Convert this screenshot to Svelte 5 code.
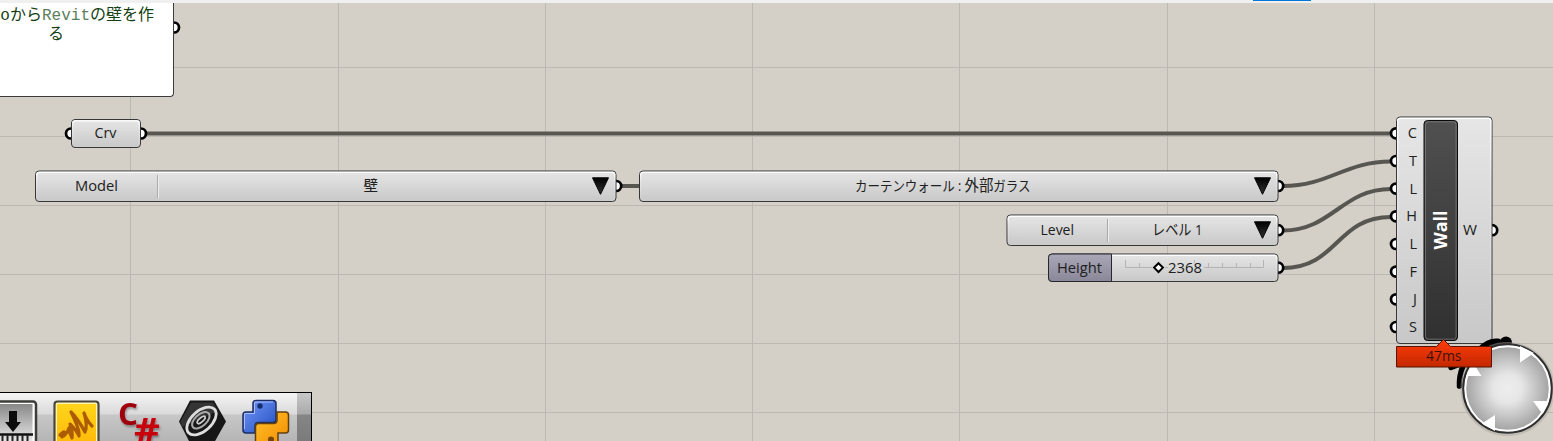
<script>
  const columns = [130.5, 338.5, 545.5, 752.5, 959.5, 1167.5, 1374.5];
  const rows = [67.5, 136.5, 205.5, 274.5, 343.5, 412.5];
  const ports = [
    [174, 27.5], [71, 133.5], [141, 133.5], [616.2, 186], [1278.2, 186], [1278.2, 230.2], [1278.2, 267.7],
    [1492.2, 230.2]
  ];
  const inputs = [
    { name: 'C', y: 133.3 }, { name: 'T', y: 161 }, { name: 'L', y: 188.6 }, { name: 'H', y: 216.3 },
    { name: 'L', y: 244 }, { name: 'F', y: 271.6 }, { name: 'J', y: 299.3 }, { name: 'S', y: 327 }
  ];
  const wires = [
    'M146 133.5H1391',
    'M621 186H640',
    'M1283 186C1329 186 1345 161.5 1391 161.5',
    'M1283 230.5C1332 230.5 1342 189 1391 189',
    'M1283 268C1338 268 1336 217 1391 217'
  ];
  const boxes = [
    { x: 71.5, y: 119.5, w: 69, h: 28 },
    { x: 35.5, y: 171, w: 580.5, h: 30.5 },
    { x: 639.5, y: 171, w: 638.5, h: 30.5 },
    { x: 1007, y: 215, w: 271, h: 30.5 },
    { x: 1048.5, y: 254, w: 229.5, h: 27.5 },
    { x: 1396.5, y: 117, w: 95.5, h: 226.5 }
  ];
  const labels = [
    { t: 'Crv', x: 94.5, y: 138.3, w: 22 },
    { t: 'Model', x: 75, y: 191, w: 43 },
    { t: '壁', x: 363.5, y: 191, w: 14.5 },
    { t: 'Level', x: 1040.5, y: 235, w: 33.5 },
    { t: 'レベル 1', x: 1152, y: 235, w: 50.5 },
    { t: 'Height', x: 1057, y: 272.7, w: 45 },
    { t: '2368', x: 1168, y: 272.7, w: 34 },
    { t: 'W', x: 1463, y: 235, w: 14 }
  ];
  const arrows = [[592.5, 177.8], [1254.5, 177.8], [1254.5, 221.8]];
</script>

<main>
  <div class="topbar"><i></i></div>

  <svg class="canvas" width="1553" height="441" viewBox="0 0 1553 441">
    <defs>
      <linearGradient id="box" x2="0" y2="1"><stop stop-color="#e6e6e6" /><stop offset="1" stop-color="#c8c8c8" /></linearGradient>
      <linearGradient id="edge" x2="0" y2="1"><stop stop-color="#fff" /><stop offset=".3" stop-color="#fff" stop-opacity=".35" /><stop offset="1" stop-color="#fff" stop-opacity=".05" /></linearGradient>
      <linearGradient id="dark" x2="0" y2="1"><stop stop-color="#505050" /><stop offset="1" stop-color="#303030" /></linearGradient>
      <linearGradient id="mauve" x2="0" y2="1"><stop stop-color="#aaa8b8" /><stop offset="1" stop-color="#8a8898" /></linearGradient>
      <linearGradient id="red" x2="0" y2="1"><stop stop-color="#ff3c0a" /><stop offset="1" stop-color="#c42800" /></linearGradient>
      <linearGradient id="tri" x2="0" y2="1"><stop stop-color="#000" /><stop offset="1" stop-color="#333" /></linearGradient>
      <radialGradient id="dial"><stop stop-color="#eee" /><stop offset=".35" stop-color="#e6e6e6" /><stop offset="1" stop-color="#a5a5a5" /></radialGradient>
    </defs>

    <g class="grid">
      {#each columns as x}<path d="M{x} 3V441" />{/each}
      {#each rows as y}<path d="M0 {y}H1553" />{/each}
    </g>

    <g class="wires">{#each wires as d}<path {d} />{/each}</g>

    <g class="ports">
      {#each ports as [x, y]}<circle cx={x} cy={y} r="5" />{/each}
      {#each inputs as p}<circle cx="1396" cy={p.y} r="5" />{/each}
    </g>

    {#each boxes as b}
      <rect class="box" x={b.x} y={b.y} width={b.w} height={b.h} rx="3.5" />
      <rect class="shine" x={b.x + 1.2} y={b.y + 1.3} width={b.w - 2.4} height={b.h - 2.4} rx="2.5" />
    {/each}

    <path d="M157.5 175V198M1107.5 219V242" stroke="#aaa" />
    <path d="M158.5 175V198M1108.5 219V242" stroke="#eee" />
    <path d="M1111.5 254H1052a3.5 3.5 0 0 0-3.5 3.5V278a3.5 3.5 0 0 0 3.5 3.5H1111.5z" fill="url(#mauve)" stroke="#26262c" />
    <path d="M1125.5 260V267.5H1152M1165 267.5H1168M1204 267.5H1263.5V260M1139.5 263V267M1208.5 263V267M1222.5 263V267M1236.5 263V267M1250.5 263V267M1194.5 260V263" fill="none" stroke="#b4b4b4" />
    <path d="M1158.5 263.2l4.4 4.4-4.4 4.4-4.4-4.4z" fill="#fff" stroke="#000" stroke-width="2" />
    {#each arrows as [x, y]}<path d="M{x} {y}h16l-8 16.5z" fill="url(#tri)" stroke="#000" />{/each}

    {#each labels as l}
      <text x={l.x} y={l.y} textLength={l.w} lengthAdjust="spacingAndGlyphs">{l.t}</text>
    {/each}
    <text x="855" y="191" textLength="175.5" lengthAdjust="spacingAndGlyphs" class="family">カーテンウォール : <tspan class="kanji">外部</tspan>ガラス</text>
    {#each inputs as p}<text x="1417" y={p.y + 5} text-anchor="end" class="port-name">{p.name}</text>{/each}

    <rect x="1424" y="120.5" width="33.5" height="220" rx="3.5" fill="url(#dark)" stroke="#0a0a0a" />
    <rect x="1425.5" y="121.8" width="30.6" height="217.4" rx="2.5" fill="none" stroke="#888" stroke-opacity=".65" />
    <text class="wall" transform="translate(1446.5 249.5) rotate(-90)" textLength="39" lengthAdjust="spacingAndGlyphs">Wall</text>

    <path d="M1480 350Q1489 341 1498 342" fill="none" stroke="#000" stroke-width="7" stroke-linecap="round" />
    <path d="M1459.500 386Q1459 376 1463 366M1451 367.5L1460 364" fill="none" stroke="#000" stroke-width="5.500" stroke-linecap="round" />
    <circle cx="1506" cy="342.5" r="6" />
    <circle cx="1507.5" cy="389" r="46" fill="none" stroke="#a9a49c" stroke-opacity=".5" stroke-width="2" />
    <circle cx="1507.5" cy="388.5" r="44.3" fill="#fff" stroke="#303030" stroke-width="2" />
    <circle cx="1507.5" cy="388.5" r="41.3" fill="url(#dial)" />
    <path d="M1520 346V362.5L1534 353zM1466 376H1481.5L1474 364zM1533 401H1549L1542.5 414zM1495 431V415L1482 423.5z" fill="#fff" />
    <path d="M1396.5 346.5H1436.5L1443.5 339.5L1450.5 346.5H1491.5V367H1396.5z" fill="url(#red)" stroke="#571300" />
    <text x="1426" y="361.3" textLength="35.5" lengthAdjust="spacingAndGlyphs" class="time">47ms</text>
  </svg>

  <section class="note"><p>oから<span>Revit</span>の壁を作</p><p class="last">る</p></section>

  <nav class="toolbar">
    <svg width="297" height="48" viewBox="0 393 297 48">
      <defs>
        <linearGradient id="steel" x2="0" y2="1"><stop stop-color="#888" /><stop offset="1" stop-color="#eee" /></linearGradient>
        <linearGradient id="yellow" x2="0" y2="1"><stop stop-color="#ffd51c" /><stop offset="1" stop-color="#ffb908" /></linearGradient>
        <linearGradient id="blue" x2="1" y2="1"><stop stop-color="#7299fa" /><stop offset="1" stop-color="#234cbd" /></linearGradient>
        <linearGradient id="orange" x2="1" y2="1"><stop stop-color="#ffc32c" /><stop offset="1" stop-color="#f48c00" /></linearGradient>
      </defs>
      <rect x="-8" y="401.5" width="44" height="44" rx="3" fill="#fff" stroke="#3d3d39" stroke-width="2.5" />
      <rect x="-8" y="404" width="40.5" height="40" fill="url(#steel)" />
      <path d="M9 411H17V422H21L13 432L5 422H9z" fill="#0c0c0c" />
      <path d="M0 434.5H33" stroke="#111" stroke-width="2.6" />
      <path d="M2.5 435V441M7.5 435V441M12.5 435V441M17.5 435V441M22.5 435V441M27.5 435V441" stroke="#222" stroke-width="2" />

      <rect x="54.5" y="401.5" width="44" height="46" rx="3" fill="#fff4b7" stroke="#49463a" stroke-width="2.2" />
      <rect x="57" y="404" width="39" height="40" fill="url(#yellow)" />
      <path d="M60 435Q65 430 64 433L62 437Q67 434 69 428Q69 433 72 438Q73 433 70 424Q77 431 79 436Q80 430 71 412Q78 419 85 432Q88 426 84 413Q87 421 92 426" fill="none" stroke="#ad5b00" stroke-width="3.2" stroke-linecap="round" stroke-linejoin="round" />

      <g class="csharp">
        <text class="c" x="118" y="424.500" textLength="20" lengthAdjust="spacingAndGlyphs">C</text>
        <text class="sharp" x="134" y="441.500" textLength="26" lengthAdjust="spacingAndGlyphs">#</text>
      </g>

      <path d="M190 400.5H214L226 421.5L214 443H190L179 421.5z" fill="#171717" />
      <path d="M191 402.5H213L218 411L182 427L180.5 421.5z" fill="#4d4d4d" opacity=".55" />
      <g transform="rotate(-42 201.5 421)" fill="none" stroke="#ddd">
        <ellipse cx="201.5" cy="421" rx="17.5" ry="10" stroke-width="2.800" />
        <ellipse cx="201.5" cy="420" rx="10.5" ry="5.8" stroke="#aaa" stroke-width="2" />
        <ellipse cx="202" cy="420" rx="5" ry="2" stroke="#ccc" stroke-width="1.8" />
      </g>

      <path d="M256 400.5Q253 400.5 253 403.5V412H246Q243 412 243 415V430Q243 433 246 433H255V426Q255 422.500 258.500 422.500H273Q276 422.500 276 419.500V403.500Q276 400.500 273 400.500z" fill="url(#blue)" stroke="#1c2d66" stroke-width="1.5" />
      <path d="M277 412H285.500Q288.500 412 288.500 415V430Q288.500 433 285.500 433H278V444H255.500V427Q255.500 423.500 258.500 423.500H273.500Q277 423.500 277 420z" fill="url(#orange)" stroke="#62400e" stroke-width="1.5" />
      <path d="M244.500 429V413.500H254.500V402H273" fill="none" stroke="#a6bdff" stroke-width="1" />
      <circle cx="260" cy="406" r="2.700" fill="#162d6d" /><circle cx="271" cy="439.500" r="3" fill="#71450b" />
    </svg>
    <span class="grip"></span>
  </nav>
</main>

<style>
  :global(body) { margin: 0; overflow: hidden; }
  main { position: relative; width: 1553px; height: 441px; overflow: hidden; background: #d4d0c8; }
  svg { display: block; }
  .topbar { height: 3px; background: #f0f0f0; }
  .topbar i { display: block; width: 58px; height: 1px; margin-left: 1253px; background: #0078d7; }
  .canvas { position: absolute; inset: 0; }
  .canvas text { font: 15px "Open Sans", "Noto Sans CJK JP", sans-serif; fill: #202020; }
  .canvas .port-name { font-size: 14.5px; }
  .canvas .family { font-size: 13.8px; }
  .canvas .kanji { font-size: 16px; }
  .canvas .wall { font-weight: 700; font-size: 18px; fill: #fff; }
  .canvas .time { fill: #3c1208; }
  .grid path { stroke: #bcb9b2; stroke-width: 1; }
  .wires path { fill: none; stroke: #575650; stroke-width: 4; }
  .ports circle { fill: #fff; stroke: #000; stroke-width: 2.7; }
  .box { fill: url(#box); stroke: #37373a; }
  .shine { fill: none; stroke: url(#edge); stroke-width: 1.3; }
  .note {
    position: absolute; left: -62px; top: 3px; width: 236px; height: 94px; box-sizing: border-box;
    border: solid #3c3c3c; border-width: 0 1px 1px 0; border-radius: 0 0 4px; background: #fff;
    color: #153f15; font: 16px/19px "Liberation Mono", "Noto Sans CJK JP", monospace;
  }
  .note p { margin: 4px 0 0; padding-right: 19px; text-align: right; white-space: nowrap; }
  .note span { color: #5b805b; }
  .note .last { margin: 0; padding-right: 109px; }
  .toolbar {
    position: absolute; left: 0; bottom: 0; width: 312px; height: 49px; box-sizing: border-box; display: flex;
    border: solid #000; border-width: 1px 1px 0 0;
    background: linear-gradient(#f4f4f4, #dadada 21px, #c7c7c7 22px, #b5b5b5);
  }
  .grip { flex: 1; background: linear-gradient(#c8c8c8, #a9a9a9 21px, #858585 22px, #7b7b7b); }
  .csharp { filter: drop-shadow(1px 2px 1px #0005); }
  .c { font: 700 30px "Open Sans", sans-serif; fill: #a0000c; }
  .sharp { font: 700 34px "Open Sans", sans-serif; fill: #c8000c; }
</style>
